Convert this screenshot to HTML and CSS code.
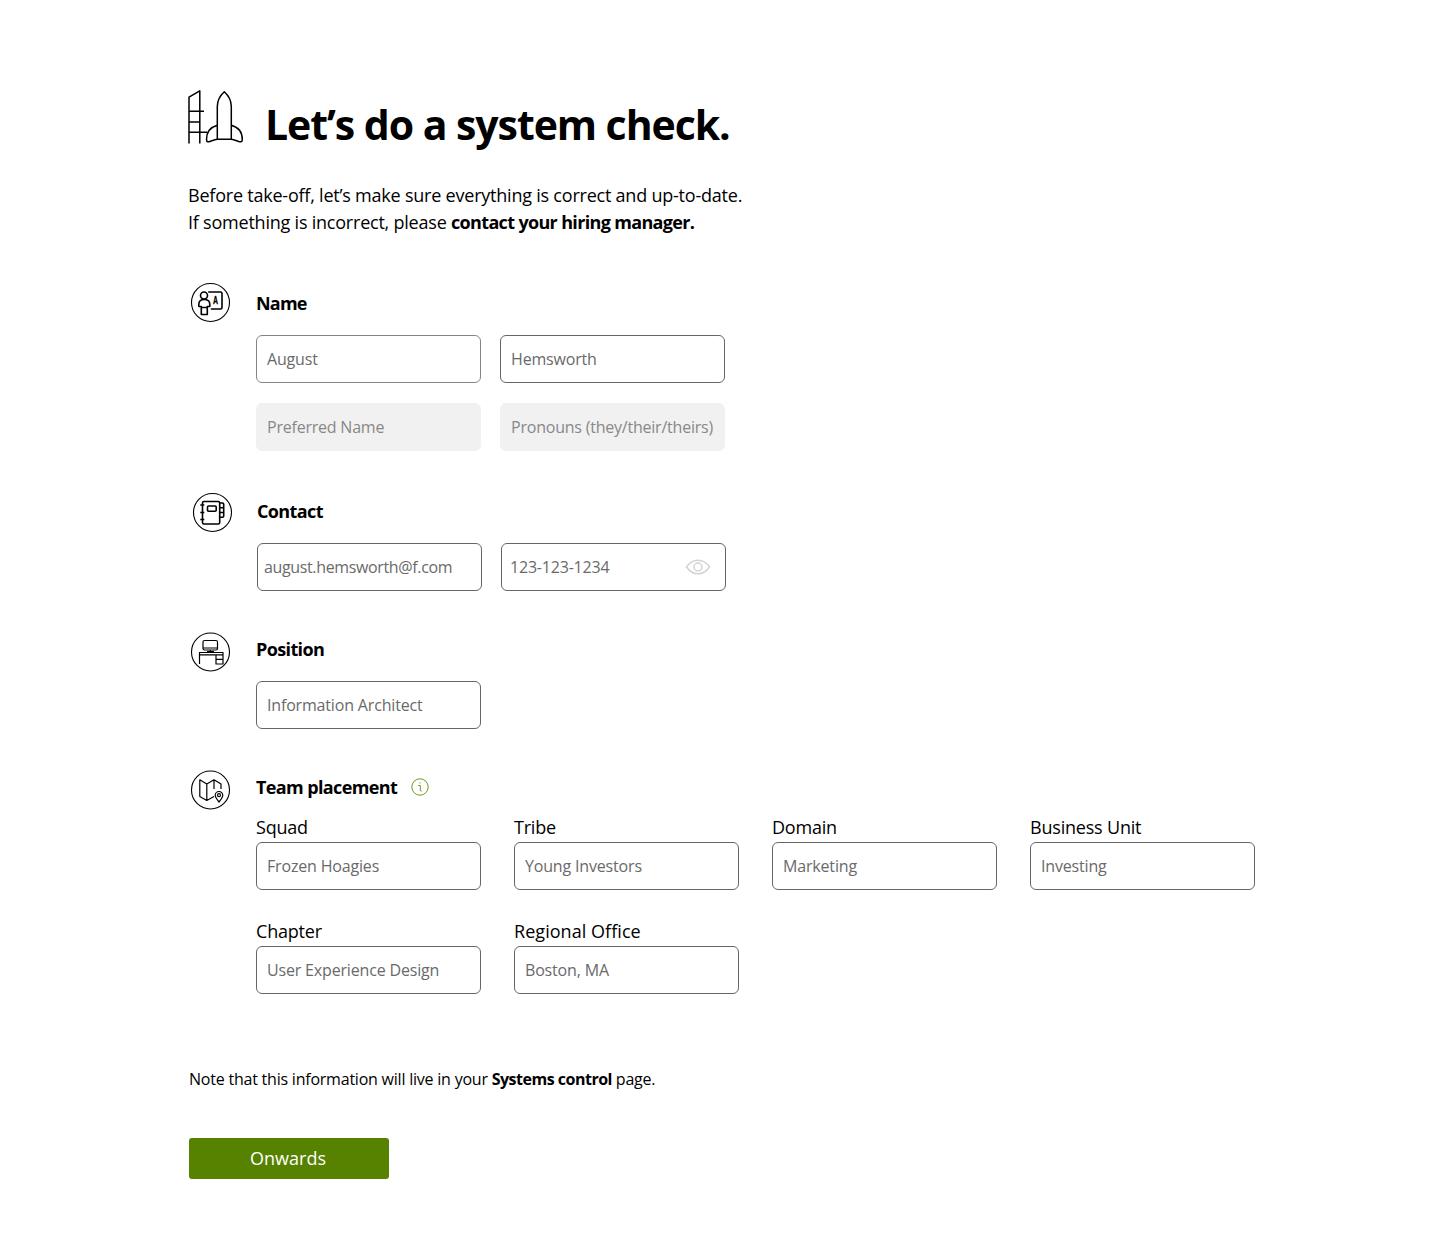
FILE: index.html
```
<!DOCTYPE html>
<html lang="en">
<head>
<meta charset="utf-8">
<title>System check</title>
<link rel="stylesheet" href="styles.css">
</head>
<body>
<main class="page">
  <header class="header">
    <svg class="rocket" viewBox="0 0 57 55" width="57" height="55" aria-hidden="true">
      <path d="M1 53.5V7.2L11.8.8V53.5M1 21.3H16M1 32H11.8M1 42.2H19.5"/>
      <path d="M29.3 49.2V16.5C29.3 9.5 32.2 5.5 36.3 1.8C40.4 5.5 43.3 9.5 43.3 16.5V49.2ZM29.3 35.3C21.5 37.5 18.5 43.5 18.5 49.5C18.5 52.5 20.5 52 22.5 51.2C25 50.3 27 49.4 29.3 49.2M43.3 35.3C51.1 37.5 54.3 43.5 54.3 49.5C54.3 52.5 52 52 50 51.2C47.5 50.3 45.5 49.4 43.3 49.2"/>
    </svg>
    <h1 class="title">Let’s do a system check.</h1>
  </header>

  <p class="intro">Before take-off, let’s make sure everything is correct and up-to-date.<br>If something is incorrect, please <b class="strong">contact your hiring manager.</b></p>

  <form class="form">
    <section class="section name">
      <svg class="badge" viewBox="0 0 41 41" width="41" height="41" aria-hidden="true">
        <circle class="ring" cx="20.5" cy="20.5" r="19"/>
        <circle cx="14" cy="13.5" r="3.5"/>
        <path d="M11.3 32.5V24.5H8.8V22.5C8.8 19.5 11 17.5 14.3 17.5S19.8 19.5 19.8 22.5V24.5H17.3V32.5ZM11 25.5H17.6M18.2 10H30.5Q32 10 32 11.5V25.5Q32 27 30.5 27H20.8"/>
        <text class="letter" x="23" y="21.8" textLength="5" lengthAdjust="spacingAndGlyphs">A</text>
      </svg>
      <div class="content">
        <h2 class="heading">Name</h2>
        <div class="pair">
          <input class="field soft" value="August" aria-label="First name">
          <input class="field" value="Hemsworth" aria-label="Last name">
          <input class="field filled" placeholder="Preferred Name">
          <input class="field filled" placeholder="Pronouns (they/their/theirs)">
        </div>
      </div>
    </section>

    <section class="section contact">
      <svg class="badge" viewBox="0 0 41 41" width="41" height="41" aria-hidden="true">
        <circle class="ring" cx="20.5" cy="20.5" r="19"/>
        <rect x="10.5" y="9.5" width="17.2" height="22.5" rx="1.5"/>
        <rect x="15.5" y="14" width="8.7" height="5.3" rx="1"/>
        <path d="M8.3 13H12.3M8.3 20.5H12.3M8.3 27.5H12.3M27.7 11H30.5Q31.7 11 31.7 12.2V24Q31.7 25.2 30.5 25.2H27.7M27.7 15.7H31.7M27.7 20.5H31.7"/>
      </svg>
      <div class="content">
        <h2 class="heading">Contact</h2>
        <div class="pair">
          <input class="field email" value="august.hemsworth@f.com" aria-label="Email">
          <div class="reveal">
            <input class="field phone" value="123-123-1234" aria-label="Phone">
            <svg class="eye" viewBox="0 0 26 16" width="26" height="16" aria-hidden="true">
              <path d="M1.5 8C4.300 4 8.400 1.200 13 1.200S21.700 4 24.500 8C21.700 12 17.600 14.800 13 14.800S4.300 12 1.500 8Z"/>
              <circle cx="13" cy="8" r="4"/>
            </svg>
          </div>
        </div>
      </div>
    </section>

    <section class="section position">
      <svg class="badge thin" viewBox="0 0 41 41" width="41" height="41" aria-hidden="true">
        <circle class="ring" cx="20.5" cy="20" r="19"/>
        <rect x="13" y="8.500" width="14.500" height="9.500" rx="1.500"/>
        <path d="M13 16H27.500M20.300 18V20M17 19.500H24M9.500 32V20.500H33V32H26V22.800M9.500 22.800H33M26 27.300H33"/>
      </svg>
      <div class="content">
        <h2 class="heading">Position</h2>
        <div class="pair">
          <input class="field" value="Information Architect" aria-label="Position">
        </div>
      </div>
    </section>

    <section class="section team">
      <svg class="badge thin" viewBox="0 0 41 41" width="41" height="41" aria-hidden="true">
        <circle class="ring" cx="20.5" cy="20" r="19"/>
        <path d="M24 26.500L16.800 30.500L9.800 26.500V9.800L16.800 14L24 9.800L31 14V19M16.800 14V30.500M24 9.800V19"/>
        <path d="M29 32C26.500 29 25.200 27.300 25.200 25.300A3.800 3.800 0 0 1 32.800 25.300C32.800 27.300 31.500 29 29 32Z"/>
        <circle cx="29" cy="25.200" r="1.500"/>
      </svg>
      <div class="content">
        <h2 class="heading">Team placement
          <svg class="info" viewBox="0 0 18 18" width="18" height="18" aria-hidden="true">
            <circle cx="9" cy="9" r="8.200"/>
            <path d="M7.200 7.500H9.300V12.500Q9.300 13.200 10.800 13M8.300 4.900H9.500"/>
          </svg>
        </h2>
        <div class="grid">
          <label class="item">Squad<input class="field" value="Frozen Hoagies"></label>
          <label class="item">Tribe<input class="field" value="Young Investors"></label>
          <label class="item">Domain<input class="field" value="Marketing"></label>
          <label class="item">Business Unit<input class="field" value="Investing"></label>
          <label class="item">Chapter<input class="field" value="User Experience Design"></label>
          <label class="item wide">Regional Office<input class="field" value="Boston, MA"></label>
        </div>
      </div>
    </section>

    <p class="note">Note that this information will live in your <b class="strong">Systems control</b> page.</p>
    <button class="button" type="button">Onwards</button>
  </form>
</main>
</body>
</html>
```
FILE: styles.css
```
* { box-sizing: border-box; margin: 0; }
body { background: #fff; color: #000; font-family: "Open Sans", "Noto Sans", sans-serif; }
.page { padding: 90px 0 0 188px; }
svg { fill: none; stroke: #000; stroke-width: 1.5; stroke-linejoin: round; flex: none; }

.header { display: flex; gap: 20px; height: 92px; }
.rocket { margin-top: -.5px; }
.title { font-size: 41px; line-height: 68px; font-weight: 700; letter-spacing: -1.05px; }
.intro { font-size: 18px; line-height: 27px; letter-spacing: -.22px; }
.strong { font-weight: 700; letter-spacing: -.66px; }

.section { display: flex; padding-left: 2px; gap: 25px; }
.name { margin-top: 46px; height: 210px; }
.contact { height: 140px; padding-left: 4px; gap: 24px; }
.position { height: 138px; }
.team { height: 298px; }
.badge { stroke-width: 1.6; }
.thin { stroke-width: 1.2; }
.ring { stroke-width: 1.1; }
.letter { font: 700 10px "Liberation Sans", sans-serif; fill: #000; stroke: #000; stroke-width: .3; }

.heading { display: flex; align-items: center; gap: 14px; height: 42px; font-size: 18px; font-weight: 700; letter-spacing: -.62px; }
.name .heading { letter-spacing: -.8px; }
.contact .heading { height: 37px; }
.position .heading, .team .heading { height: 33px; }
.info { stroke: #6a9a20; stroke-width: 1; }
.pair { display: grid; grid-template-columns: 225px 225px; gap: 20px 19px; margin-top: 11px; }
.contact .pair { margin-top: 14px; }
.position .pair { margin-top: 16px; }
.field { display: block; width: 225px; height: 48px; padding: 0 10px; border: 1px solid #666; border-radius: 6px; background: #fff; color: #6a6a6a; font: 400 16px "Open Sans", "Noto Sans", sans-serif; letter-spacing: -.17px; outline: 0; }
.soft { border-color: #858585; }
.filled { border-color: #f1f1f1; background: #f1f1f1; }
.filled::placeholder { color: #888; opacity: 1; letter-spacing: -.22px; }
.email { padding-left: 6px; letter-spacing: -.36px; }
.phone { padding-left: 8px; letter-spacing: -.2px; }
.reveal { position: relative; }
.eye { position: absolute; right: 15px; top: 16px; stroke: #d4d4d4; stroke-width: 1.5; }
.grid { display: grid; grid-template-columns: repeat(4, 225px); gap: 26px 33px; margin-top: 9px; }
.item { display: block; font-size: 18px; line-height: 30px; letter-spacing: -.2px; }
.wide { letter-spacing: .05px; }
.note { padding-left: 1px; font-size: 16px; line-height: 22px; letter-spacing: -.22px; }
.note .strong { letter-spacing: -.5px; }
.button { display: block; width: 200px; height: 41px; margin: 48px 0 0 1px; padding: 0 2px 1px 0; border: 0; border-radius: 3px; background: #568200; color: #fff; font: 400 18px "Open Sans", "Noto Sans", sans-serif; letter-spacing: 0; }
```
